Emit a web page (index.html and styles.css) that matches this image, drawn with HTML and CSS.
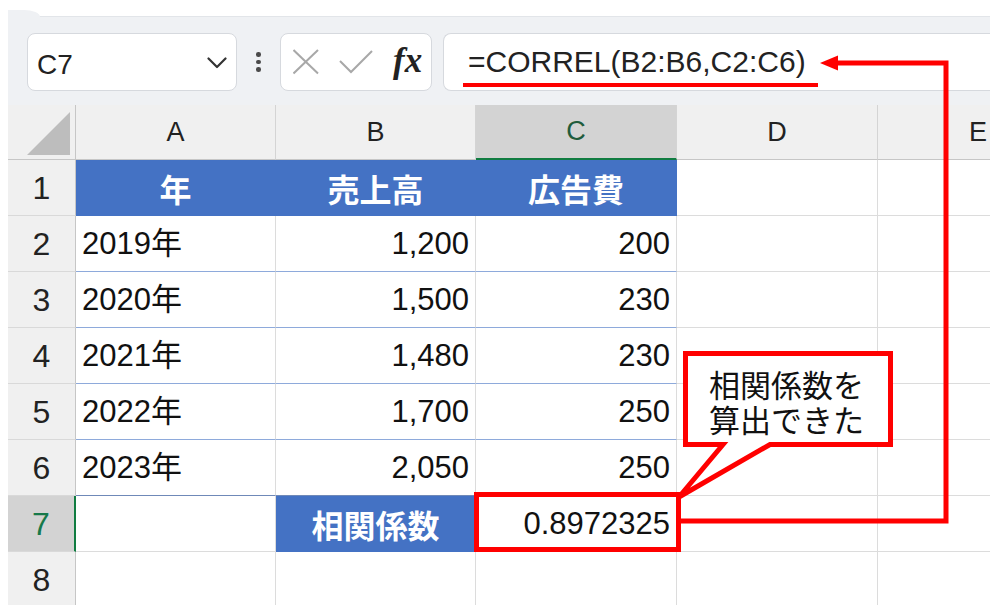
FILE: index.html
```html
<!DOCTYPE html>
<html lang="ja">
<head>
<meta charset="utf-8">
<title>CORREL</title>
<link rel="stylesheet" href="styles.css">
</head>
<body>
<div class="app">
  <div class="toolbar">
    <div class="namebox">
      <span class="ref">C7</span>
      <svg class="chev" width="20" height="12" viewBox="0 0 20 12"><polyline points="1.5,1.5 10,10 18.5,1.5" fill="none" stroke="#333" stroke-width="2.2" stroke-linecap="round" stroke-linejoin="round"/></svg>
    </div>
    <div class="dots"><i></i><i></i><i></i></div>
    <div class="fxbox">
      <svg class="fxicons" width="90" height="56" viewBox="0 0 90 56">
        <line x1="0.5" y1="16" x2="25" y2="39.5" stroke="#a8a8a8" stroke-width="2"/>
        <line x1="25" y1="16" x2="0.5" y2="39.5" stroke="#a8a8a8" stroke-width="2"/>
        <polyline points="47,27 58,38 79,17" fill="none" stroke="#a8a8a8" stroke-width="2"/>
      </svg>
      <span class="fx">fx</span>
    </div>
    <div class="formula"><span>=CORREL(B2:B6,C2:C6)</span></div>
  </div>
  <div class="grid">
    <div class="corner"><svg width="67" height="54" viewBox="0 0 67 54"><polygon points="19,50 62,7 62,50" fill="#bdbdbd"/></svg></div>
    <div class="h">A</div>
    <div class="h">B</div>
    <div class="h sel">C</div>
    <div class="h">D</div>
    <div class="h">E</div>

    <div class="rh">1</div>
    <div class="c b">年</div>
    <div class="c b">売上高</div>
    <div class="c b">広告費</div>
    <div class="c"></div>
    <div class="c"></div>

    <div class="rh">2</div>
    <div class="c t">2019年</div>
    <div class="c t n">1,200</div>
    <div class="c t n">200</div>
    <div class="c"></div>
    <div class="c"></div>

    <div class="rh">3</div>
    <div class="c t">2020年</div>
    <div class="c t n">1,500</div>
    <div class="c t n">230</div>
    <div class="c"></div>
    <div class="c"></div>

    <div class="rh">4</div>
    <div class="c t">2021年</div>
    <div class="c t n">1,480</div>
    <div class="c t n">230</div>
    <div class="c"></div>
    <div class="c"></div>

    <div class="rh">5</div>
    <div class="c t">2022年</div>
    <div class="c t n">1,700</div>
    <div class="c t n">250</div>
    <div class="c"></div>
    <div class="c"></div>

    <div class="rh">6</div>
    <div class="c tl">2023年</div>
    <div class="c tl n">2,050</div>
    <div class="c tl n">250</div>
    <div class="c"></div>
    <div class="c"></div>

    <div class="rh sel">7</div>
    <div class="c"></div>
    <div class="c b">相関係数</div>
    <div class="c n">0.8972325</div>
    <div class="c"></div>
    <div class="c"></div>

    <div class="rh">8</div>
    <div class="c"></div>
    <div class="c"></div>
    <div class="c"></div>
    <div class="c"></div>
    <div class="c"></div>
  </div>
</div>

<svg class="marks" width="1000" height="613" viewBox="0 0 1000 613">
  <rect x="463" y="83" width="355" height="4" fill="#ff0000"/>
  <polyline points="680,521 946,521 946,63 834,63" fill="none" stroke="#ff0000" stroke-width="5"/>
  <polygon points="820,63 838,55.5 838,70.5" fill="#ff0000"/>
  <rect x="476.5" y="494.5" width="202" height="55" fill="none" stroke="#ff0000" stroke-width="5"/>
  <path d="M685.5 353.5 H890.5 V444.5 H770 L679 497 L723 444.5 H685.5 Z" fill="#ffffff" stroke="#ff0000" stroke-width="5"/>
</svg>
<div class="callout-text">
  <div class="line">相関係数を</div>
  <div class="line">算出できた</div>
</div>
</body>
</html>
```

FILE: styles.css
```css
* { box-sizing: border-box; }
html, body { margin: 0; padding: 0; background: #ffffff; }
body {
  width: 1000px;
  height: 613px;
  overflow: hidden;
  position: relative;
  font-family: "Liberation Sans", "Noto Sans CJK JP", sans-serif;
}

.app {
  margin: 16px 10px 0 8px;
  width: 982px;
  background: #eff1f4;
  position: relative;
}

.toolbar {
  height: 89px;
  display: flex;
  align-items: flex-start;
  padding: 16px 0 0 19px;
  border-top: 1px solid #e2e5e9;
  position: relative;
}
.toolbar::before {
  content: "";
  position: absolute;
  left: 0;
  top: -7px;
  width: 32px;
  height: 7px;
  background: #eff1f4;
  border-top-right-radius: 16px 7px;
}

.namebox {
  width: 210px;
  height: 58px;
  background: #ffffff;
  border: 1px solid #d6d9de;
  border-radius: 8px;
  display: flex;
  align-items: center;
  padding: 5px 9px 0 9px;
  font-size: 28px;
  color: #222222;
}
.namebox .chev { margin-left: auto; margin-top: -4px; }

.dots {
  width: 43px;
  height: 58px;
  display: flex;
  flex-direction: column;
  align-items: center;
  justify-content: center;
  gap: 3px;
}
.dots i {
  display: block;
  width: 4.5px;
  height: 4.5px;
  border-radius: 50%;
  background: #4a4a4a;
}

.fxbox {
  width: 152px;
  height: 58px;
  background: #ffffff;
  border: 1px solid #d6d9de;
  border-radius: 8px;
  display: flex;
  align-items: center;
  padding-left: 12px;
}
.fx {
  margin-left: 10px;
  font-family: "Liberation Serif", serif;
  font-style: italic;
  font-weight: 700;
  font-size: 35px;
  line-height: 1;
  color: #222222;
  margin-top: -4px;
}

.formula {
  margin-left: 11px;
  flex: 1;
  height: 58px;
  background: #ffffff;
  border: 1px solid #d6d9de;
  border-right: none;
  border-radius: 8px 0 0 8px;
  padding-left: 24px;
  display: flex;
  align-items: center;
  font-size: 30px;
  color: #222222;
}

.grid {
  display: grid;
  grid-template-columns: 68px 200px 200px 201px 201px 201px;
  grid-template-rows: 55px repeat(8, 56px);
  width: 982px;
  height: 500px;
  overflow: hidden;
  background: #ffffff;
}

.corner {
  background: #f0f0f0;
  border-right: 1px solid #c6c6c6;
  border-bottom: 1px solid #c6c6c6;
}
.corner svg { display: block; }

.h {
  background: #f0f0f0;
  border-right: 1px solid #d4d4d4;
  border-bottom: 1px solid #c6c6c6;
  display: flex;
  align-items: center;
  justify-content: center;
  font-size: 27px;
  line-height: 1;
  color: #222222;
}
.h.sel {
  background: #d3d3d3;
  border-bottom: 2px solid #107c41;
  color: #1f5c3c;
}

.rh {
  background: #f0f0f0;
  border-right: 1px solid #c6c6c6;
  border-bottom: 1px solid #d9d9d9;
  display: flex;
  align-items: center;
  justify-content: center;
  font-size: 32px;
  line-height: 1;
  color: #222222;
}
.rh.sel {
  background: #d3d3d3;
  border-right: 2px solid #107c41;
  color: #17794a;
}

.c {
  border-right: 1px solid #dcdcdc;
  border-bottom: 1px solid #dcdcdc;
  display: flex;
  align-items: center;
  padding: 0 6px;
  font-size: 31px;
  line-height: 1;
  color: #111111;
  white-space: nowrap;
}
.c.n { justify-content: flex-end; }
.c.t { border-bottom-color: #8eaadb; }
.c.tl { border-bottom-color: #6f89b8; }
.c.b {
  background: #4472c4;
  border-color: #4472c4;
  color: #ffffff;
  font-family: "Noto Sans CJK JP", sans-serif;
  font-weight: 700;
  font-size: 32px;
  justify-content: center;
}

.marks {
  position: absolute;
  left: 0;
  top: 0;
  pointer-events: none;
}

.callout-text {
  position: absolute;
  left: 709px;
  top: 366px;
  font-family: "Noto Sans CJK JP", sans-serif;
  font-size: 31px;
  color: #111111;
  white-space: nowrap;
}
.callout-text .line {
  height: 35px;
  line-height: 35px;
}
```
